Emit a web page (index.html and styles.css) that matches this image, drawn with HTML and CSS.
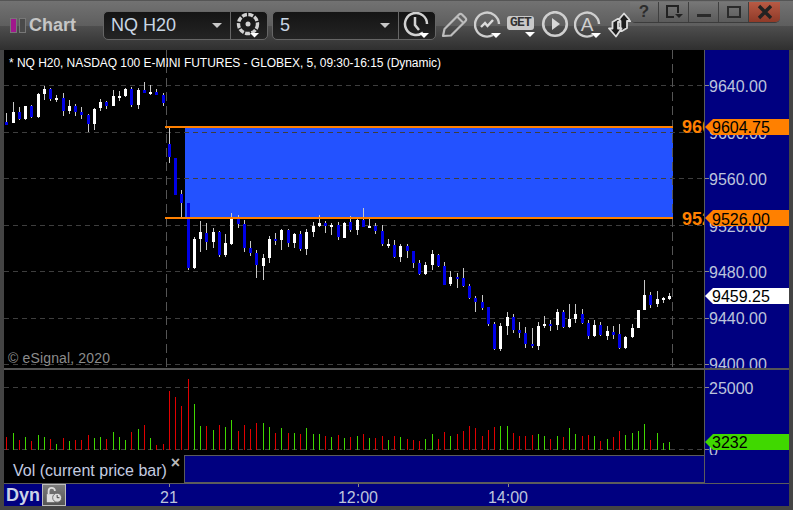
FILE: index.html
```html
<!DOCTYPE html>
<html lang="en">
<head>
<meta charset="utf-8">
<title>Chart</title>
<link rel="stylesheet" href="styles.css">
</head>
<body>
<div class="window">
  <header class="titlebar">
    <div class="brand">
      <span class="pip pip-on"></span><span class="pip pip-off"></span>
      <span class="brand-name">Chart</span>
    </div>
    <div class="combo combo-symbol">
      <div class="combo-field"><span>NQ H20</span><i class="caret"></i></div>
      <div class="combo-btn">
        <svg class="ico" viewBox="0 0 28 28"><circle cx="13" cy="12" r="9.500" fill="none" stroke="#d2d2d2" stroke-width="3.400" stroke-dasharray="5 1.400"/><circle cx="13" cy="12" r="2.500" fill="#d2d2d2"/><path d="M15 21h9l-4.500 4.500z" fill="#fff"/></svg>
      </div>
    </div>
    <div class="combo combo-interval">
      <div class="combo-field"><span>5</span><i class="caret"></i></div>
      <div class="combo-btn">
        <svg class="ico" viewBox="0 0 28 28"><path d="M20 20.500A11 11 0 1 1 24 12" fill="none" stroke="#d2d2d2" stroke-width="2.500"/><path d="M12 5v8l4 5" fill="none" stroke="#d2d2d2" stroke-width="2.500"/><path d="M16 21h10l-5 5z" fill="#fff"/></svg>
      </div>
    </div>
    <div class="tools">
      <svg class="tool tool-pencil" viewBox="0 0 28 28"><path d="M2 25l1.500-7L18 3.500a2 2 0 0 1 3 0l3.500 3.500a2 2 0 0 1 0 3L10 24.500z" fill="none" stroke="#bdbdbd" stroke-width="2.200" stroke-linejoin="round"/><path d="M16 5.500l6 6" stroke="#bdbdbd" stroke-width="2"/></svg>
      <svg class="tool" viewBox="0 0 28 28"><path d="M19 24A12 12 0 1 1 25 13" fill="none" stroke="#cfcfcf" stroke-width="2.400"/><path d="M7 16l4-4 2.500 3L19 9" fill="none" stroke="#dcdcdc" stroke-width="2.400"/><path d="M17 22h10l-5 5z" fill="#fff"/></svg>
      <div class="get"><span class="get-text">GET</span><i class="caret caret-get"></i></div>
      <svg class="tool" viewBox="0 0 28 28"><circle cx="14" cy="13" r="11.800" fill="none" stroke="#cfcfcf" stroke-width="2.600"/><path d="M11 7l8 6-8 6z" fill="#d8d8d8"/></svg>
      <div class="tool-a"><svg class="tool" viewBox="0 0 28 28"><path d="M19 24A12 12 0 1 1 25 13" fill="none" stroke="#cfcfcf" stroke-width="2.400"/><path d="M17 22h10l-5 5z" fill="#fff"/></svg><span class="tool-a-text">A</span></div>
      <svg class="tool-swap" viewBox="0 0 24 26"><path d="M16 1.500l6.500 7.500h-3.500v7l-5 3h-3.500v-3h2v-7h-3z" fill="#1e1e1e" stroke="#dcdcdc" stroke-width="1.800" stroke-linejoin="round"/><path d="M8 24.500L1 16.500h3.500V10l5-3h2v3h-1.500v6.500h3.500z" fill="#1e1e1e" stroke="#dcdcdc" stroke-width="1.800" stroke-linejoin="round"/></svg>
    </div>
    <div class="winbtns">
      <div class="winbtn winbtn-help"><span class="winq">?</span></div>
      <div class="winbtn"><svg class="winico" viewBox="0 0 20 16"><path d="M14 9V2H3v11h7" fill="none" stroke="#222" stroke-width="2"/><path d="M11 10h8l-4 4z" fill="#222"/></svg></div>
      <div class="winbtn"><i class="winmin"></i></div>
      <div class="winbtn"><i class="winmax"></i></div>
      <div class="winbtn winclose"><svg class="winico" viewBox="0 0 20 16"><path d="M4 2l12 12M16 2L4 14" stroke="#222" stroke-width="3.400"/></svg></div>
    </div>
  </header>

  <main class="panes">
    <svg class="pane pane-price" viewBox="4 50 785 318">
      <rect class="plot-bg" x="4" y="50" width="701" height="318"/>
      <rect class="zone" x="185" y="128" width="488" height="89"/>
      <path class="grid" d="M4 85.500H705M4 132.500H705M4 178.500H705M4 225.500H705M4 271.500H705M4 318.500H705M4 364.500H705"/>
      <path class="vgrid" d="M166.500 50V368M672.500 50V368"/>
      <path class="wick" d="M6.500 113V125M13.500 102V123M19.500 107V120M25.500 106V120M31.500 105V118M38.500 93V118M44.500 86V100M50.500 88V101M56.500 95V102M63.500 93V116M69.500 100V114M75.500 104V116M81.500 107V119M88.500 114V132M94.500 108V130M100.500 99V111M106.500 101V109M113.500 90V106M119.500 91V101M125.500 88V97M131.500 87V107M138.500 88V109M144.500 82V93M150.500 85V95M156.500 89V95M163.500 93V106M169.500 127V163M175.500 158V195M181.500 190V218M188.500 203V270M194.500 237V269M200.500 221V252M206.500 223V250M213.500 228V248M219.500 231V257M225.500 234V257M231.500 213V245M238.500 215V228M244.500 220V252M250.500 241V256M256.500 250V278M263.500 254V280M269.500 236V263M275.500 233V245M281.500 229V250M288.500 229V247M294.500 233V248M300.500 231V251M306.500 229V255M313.500 222V237M319.500 215V227M325.500 221V233M331.500 223V235M338.500 222V240M344.500 222V238M350.500 216V232M357.500 218V235M363.500 208V227M369.500 219V228M375.500 223V234M382.500 225V246M388.500 239V248M394.500 240V258M400.500 244V262M407.500 244V258M413.500 251V268M419.500 260V275M425.500 262V275M432.500 250V270M438.500 254V267M444.500 262V285M450.500 271V286M457.500 273V288M463.500 268V287M469.500 284V299M475.500 296V312M482.500 295V310M488.500 307V326M494.500 322V350M500.500 323V351M507.500 312V335M513.500 314V333M519.500 322V338M525.500 327V348M532.500 328V348M538.500 322V350M544.500 316V328M550.500 320V331M557.500 309V330M563.500 310V328M569.500 304V328M575.500 304V323M582.500 309V324M588.500 320V339M594.500 320V337M600.500 322V336M607.500 326V340M613.500 326V339M619.500 324V349M625.500 336V349M632.500 324V338M638.500 310V328M644.500 280V310M650.500 292V308M657.500 291V307M663.500 297V303M669.500 293V300"/>
      <path class="body-down" d="M6.500 122V125M19.500 112V119M31.500 106V117M50.500 89V99M63.500 98V111M75.500 106V112M81.500 112V115M88.500 115V124M106.500 102V106M131.500 89V105M144.500 90V93M156.500 92V95M163.500 95V103M169.500 144V157M175.500 158V195M181.500 194V203M188.500 203V268M206.500 233V242M219.500 232V255M238.500 219V224M244.500 224V248M250.500 248V253M256.500 253V265M275.500 239V241M288.500 230V243M300.500 234V249M325.500 223V226M338.500 225V237M350.500 222V230M363.500 220V227M375.500 226V231M382.500 231V244M394.500 245V257M407.500 246V251M413.500 251V263M419.500 263V274M438.500 255V266M444.500 266V285M457.500 277V279M463.500 278V286M469.500 286V298M475.500 298V302M482.500 302V308M488.500 307V324M494.500 324V349M513.500 317V330M519.500 330V333M525.500 333V344M532.500 344V346M550.500 324V326M563.500 312V327M582.500 314V323M588.500 323V336M600.500 325V335M613.500 332V335M619.500 334V348M650.500 295V305"/>
      <path class="body-up" d="M13.500 112V123M25.500 106V119M38.500 94V117M44.500 89V94M56.500 98V100M69.500 106V111M94.500 109V124M100.500 102V108M113.500 96V106M119.500 96V98M125.500 89V96M138.500 90V105M150.500 92V94M194.500 239V268M200.500 232V239M213.500 232V242M225.500 243V255M231.500 219V244M263.500 258V266M269.500 239V258M281.500 230V240M294.500 234V243M306.500 232V249M313.500 226V232M319.500 223V226M331.500 225V227M344.500 223V238M357.500 220V230M369.500 226V228M388.500 244V246M400.500 246V257M425.500 265V274M432.500 254V265M450.500 277V284M500.500 326V349M507.500 317V326M538.500 326V346M544.500 324V326M557.500 312V325M569.500 319V327M575.500 314V319M594.500 325V336M607.500 331V336M625.500 337V348M632.500 328V337M638.500 310V328M644.500 295V310M657.500 299V304M663.500 298V300M669.500 296V299"/>
      <rect class="level" x="165" y="126" width="508" height="2"/>
      <rect class="level" x="165" y="217" width="508" height="2"/>
      <text class="level-label" x="682" y="133">9604.75</text>
      <text class="level-label" x="682" y="225">9526.00</text>
      <text class="plot-title" x="9" y="67">* NQ H20, NASDAQ 100 E-MINI FUTURES - GLOBEX, 5, 09:30-16:15 (Dynamic)</text>
      <text class="copyright" x="8" y="363">© eSignal, 2020</text>
      <rect class="axis-bg" x="705" y="50" width="84" height="318"/>
      <path class="axis-line" d="M704.500 50V368"/>
      <path class="axis-tick" d="M705 85.500h4M705 178.500h4M705 271.500h4M705 318.500h4M705 364.500h4"/>
      <text class="axis-text" x="709" y="92">9640.00</text>
      <text class="axis-text" x="709" y="139">9600.00</text>
      <text class="axis-text" x="709" y="185">9560.00</text>
      <text class="axis-text" x="709" y="232">9520.00</text>
      <text class="axis-text" x="709" y="278">9480.00</text>
      <text class="axis-text" x="709" y="324">9440.00</text>
      <text class="axis-text" x="709" y="370">9400.00</text>
      <path class="tag-orange" d="M705 127l8-8h76v16h-76z"/>
      <text class="tag-text" x="712" y="133">9604.75</text>
      <path class="tag-orange" d="M705 218l8-8h76v16h-76z"/>
      <text class="tag-text" x="712" y="225">9526.00</text>
      <path class="tag-white" d="M705 296l8-8h76v16h-76z"/>
      <text class="tag-text" x="712" y="302">9459.25</text>
    </svg>
    <div class="pane-sep"></div>
    <svg class="pane pane-vol" viewBox="4 370 785 85">
      <rect class="plot-bg" x="4" y="370" width="701" height="85"/>
      <path class="grid" d="M4 387.500H705M4 449.500H705"/>
      <path class="vol-down" d="M6.500 437V450M19.500 440V450M31.500 441V450M50.500 439V450M63.500 438V450M75.500 440V450M81.500 440V450M88.500 435V450M106.500 439V450M131.500 432V450M144.500 425V450M156.500 445V450M163.500 444V450M169.500 391V450M175.500 397V450M181.500 406V450M188.500 379V450M206.500 426V450M219.500 425V450M238.500 431V450M244.500 425V450M250.500 429V450M256.500 423V450M275.500 433V450M288.500 433V450M300.500 434V450M325.500 436V450M338.500 435V450M350.500 437V450M363.500 434V450M375.500 438V450M382.500 436V450M394.500 436V450M407.500 439V450M413.500 440V450M419.500 441V450M438.500 439V450M444.500 432V450M457.500 434V450M463.500 431V450M469.500 426V450M475.500 428V450M482.500 436V450M488.500 430V450M494.500 427V450M513.500 433V450M519.500 436V450M525.500 436V450M532.500 435V450M550.500 439V450M563.500 437V450M582.500 436V450M588.500 435V450M600.500 441V450M613.500 437V450M619.500 431V450M650.500 440V450"/>
      <path class="vol-up" d="M13.500 433V450M25.500 437V450M38.500 435V450M44.500 437V450M56.500 444V450M69.500 441V450M94.500 438V450M100.500 437V450M113.500 432V450M119.500 437V450M125.500 440V450M138.500 429V450M150.500 438V450M194.500 404V450M200.500 426V450M213.500 430V450M225.500 427V450M231.500 420V450M263.500 423V450M269.500 427V450M281.500 428V450M294.500 433V450M306.500 428V450M313.500 434V450M319.500 434V450M331.500 437V450M344.500 438V450M357.500 436V450M369.500 438V450M388.500 440V450M400.500 437V450M425.500 439V450M432.500 434V450M450.500 436V450M500.500 426V450M507.500 426V450M538.500 434V450M544.500 436V450M557.500 436V450M569.500 428V450M575.500 434V450M594.500 436V450M607.500 439V450M625.500 435V450M632.500 433V450M638.500 431V450M644.500 424V450M657.500 433V450M663.500 443V450M669.500 442V450"/>
      <rect class="axis-bg" x="705" y="370" width="84" height="85"/>
      <path class="axis-line" d="M704.500 370V455"/>
      <path class="axis-tick" d="M705 387.500h4M705 449.500h4"/>
      <text class="axis-text" x="709" y="394">25000</text>
      <text class="axis-text" x="709" y="456">0</text>
      <path class="tag-green" d="M705 442l8-8h76v16h-76z"/>
      <text class="tag-text" x="712" y="448">3232</text>
    </svg>
    <div class="legend-row">
      <div class="legend"><span>Vol (current price bar)</span><span class="legend-x">×</span></div>
      <div class="legend-fill"></div>
      <div class="legend-axis"></div>
    </div>
    <div class="time-row">
      <span class="dyn">Dyn</span>
      <div class="lock">
        <svg class="lock-ico" viewBox="0 0 20 20"><path d="M4 9V5.500a3.500 3.500 0 0 1 7 0" fill="none" stroke="#ddd" stroke-width="2"/><rect x="2" y="9" width="9" height="9" fill="#ddd"/><circle cx="13.500" cy="13" r="5" fill="#ddd" stroke="#666"/><path d="M13.500 10v3h2.500" fill="none" stroke="#333"/></svg>
      </div>
      <svg class="time-axis" viewBox="66 484 723 22">
        <path class="axis-tick" d="M169.500 484v3M358.500 484v3M508.500 484v3"/>
        <text class="axis-text axis-mid" x="169" y="503">21</text>
        <text class="axis-text axis-mid" x="358" y="503">12:00</text>
        <text class="axis-text axis-mid" x="508" y="503">14:00</text>
      </svg>
    </div>
  </main>
</div>
</body>
</html>
```
FILE: styles.css
```css
* { box-sizing: border-box; }
html, body { margin: 0; padding: 0; background: #3e3e3e; }
body { font-family: "Liberation Sans", Arial, sans-serif; }

.window {
  width: 793px;
  height: 510px;
  display: flex;
  flex-direction: column;
  background: #444;
  overflow: hidden;
}

/* title bar */
.titlebar {
  position: relative;
  height: 50px;
  flex: none;
  display: flex;
  align-items: flex-start;
  padding: 10px 0 0 10px;
  background: linear-gradient(#727272 0, #5e5e5e 25px, #4e4e4e 25px, #2e2e2e 50px);
  border-top: 1px solid #555;
}
.brand { width: 93px; height: 28px; display: flex; align-items: center; }
.pip { width: 7px; height: 15px; margin-right: 2px; border: 1px solid #777; }
.pip-on { background: #a0188c; }
.pip-off { background: #4a4a4a; }
.brand-name { margin-left: 1px; font-size: 18px; font-weight: bold; color: #c6c6c6; line-height: 28px; }

.combo {
  height: 29px;
  display: flex;
  border: 1px solid #666;
  border-radius: 5px;
  background: linear-gradient(#141414, #242424);
}
.combo-symbol { width: 165px; margin-right: 4px; }
.combo-interval { width: 164px; }
.combo-field {
  flex: 1;
  display: flex;
  align-items: center;
  justify-content: space-between;
  padding: 0 8px 0 7px;
  font-size: 18px;
  color: #c9d6e4;
  border-right: 1px solid #666;
}
.combo-btn { width: 36px; display: flex; align-items: center; justify-content: center; }
.ico { width: 28px; height: 28px; }
.caret {
  width: 0;
  height: 0;
  border-left: 5px solid transparent;
  border-right: 5px solid transparent;
  border-top: 5px solid #c8c8c8;
}

.tools { display: flex; align-items: flex-start; margin-left: 5px; }
.tool { width: 28px; height: 28px; display: block; }
.tools > .tool { margin-right: 5px; }
.get { position: relative; width: 28px; height: 28px; margin-right: 6px; }
.get-text {
  position: absolute;
  left: 0;
  top: 5px;
  width: 27px;
  height: 14px;
  border-radius: 3px;
  background: #c9c9c9;
  font-family: "Liberation Mono", monospace;
  font-weight: bold;
  font-size: 13px;
  line-height: 14px;
  letter-spacing: -0.8px;
  text-align: center;
  color: #333;
}
.caret-get { position: absolute; right: 0; top: 21px; border-top-color: #fff; }
.tool-a { position: relative; width: 28px; height: 28px; margin-right: 6px; }
.tool-a-text {
  position: absolute;
  left: 0;
  top: 4px;
  width: 26px;
  text-align: center;
  font-size: 19px;
  line-height: 19px;
  color: #d0d0d0;
}
.tool-swap { display: block; width: 24px; height: 26px; margin-top: 1px; }

.winbtns {
  position: absolute;
  top: 1px;
  right: 13px;
  display: flex;
  height: 21px;
  border-bottom: 1px solid #3c3c3c;
  border-radius: 0 0 5px 5px;
  overflow: hidden;
}
.winbtn {
  width: 30px;
  display: flex;
  align-items: center;
  justify-content: center;
  background: linear-gradient(#777, #5b5b5b);
  border-right: 1px solid #3f3f3f;
}
.winbtn-help { width: 29px; }
.winq { font-size: 17px; font-weight: bold; color: #2c2c2c; }
.winico { width: 20px; height: 16px; }
.winmin { width: 14px; height: 3px; margin-top: 6px; background: #2a2a2a; }
.winmax { width: 14px; height: 12px; border: 2px solid #2a2a2a; }
.winclose { width: 31px; border-right: 0; background: linear-gradient(#b85a44, #8f3a28); }

/* chart panes */
.panes { flex: 1; display: flex; flex-direction: column; margin: 0 4px 4px; background: #000; }
.pane { display: block; width: 785px; flex: none; }
.pane-price { height: 318px; }
.pane-vol { height: 85px; }
.pane-sep { height: 2px; flex: none; background: #555; }

.plot-bg { fill: #000; }
.axis-bg { fill: #000080; }
.axis-line { stroke: #5c5c5c; stroke-width: 1; }
.axis-tick { stroke: #8a8a8a; stroke-width: 1; }
.zone { fill: #2352ff; }
.grid { stroke: #3e3e3e; stroke-width: 1; stroke-dasharray: 5 4; fill: none; }
.vgrid { stroke: #555; stroke-width: 1; stroke-dasharray: 9 5; fill: none; }
.wick { stroke: #c8c8c8; stroke-width: 1; fill: none; }
.body-down { stroke: #0000e6; stroke-width: 3; fill: none; }
.body-up { stroke: #fff; stroke-width: 3; fill: none; }
.level { fill: #ff8000; }
.level-label { font-size: 18px; font-weight: bold; fill: #ff8000; }
.plot-title { font-size: 12px; letter-spacing: -0.04px; fill: #fff; }
.copyright { font-size: 14px; letter-spacing: 0.15px; fill: #8c8c8c; }
.axis-text { font-size: 16px; fill: #bcc4dc; }
.axis-mid { text-anchor: middle; }
.tag-orange { fill: #ff8000; }
.tag-white { fill: #fff; }
.tag-green { fill: #40d800; }
.tag-text { font-size: 16px; fill: #000; }
.vol-down { stroke: #e00000; stroke-width: 1; fill: none; }
.vol-up { stroke: #40d800; stroke-width: 1; fill: none; }

.legend-row { height: 28px; flex: none; display: flex; }
.legend {
  position: relative;
  width: 180px;
  flex: none;
  padding: 7px 0 0 9px;
  font-size: 16px;
  line-height: 18px;
  color: #c4cce0;
  background: #000;
}
.legend-x {
  position: absolute;
  right: 4px;
  top: -1px;
  font-size: 16px;
  font-weight: bold;
  color: #b8b8b8;
}
.legend-fill {
  width: 521px;
  flex: none;
  background: #000080;
  border: 1px solid #5c5c5c;
}
.legend-axis { flex: 1; background: #000080; }

.time-row {
  flex: 1;
  display: flex;
  align-items: stretch;
  background: #000080;
  border-top: 1px solid #5c5c5c;
  height: 23px;
}
.dyn { width: 38px; flex: none; padding: 1px 0 0 2px; font-size: 18px; font-weight: bold; color: #ccd2e6; }
.lock {
  width: 24px;
  flex: none;
  display: flex;
  align-items: center;
  justify-content: center;
  background: linear-gradient(#7c7c7c, #555);
  border: 1px solid #bdbdbd;
}
.lock-ico { width: 18px; height: 18px; }
.time-axis { flex: 1; display: block; height: 22px; }
```
